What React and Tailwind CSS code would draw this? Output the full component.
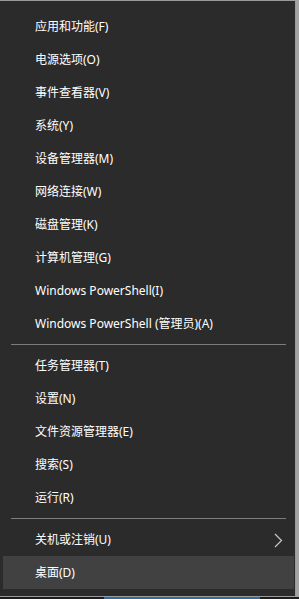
import React from 'react';

const groups = [
  [
    '应用和功能(F)',
    '电源选项(O)',
    '事件查看器(V)',
    '系统(Y)',
    '设备管理器(M)',
    '网络连接(W)',
    '磁盘管理(K)',
    '计算机管理(G)',
    'Windows PowerShell(I)',
    'Windows PowerShell (管理员)(A)',
  ],
  ['任务管理器(T)', '设置(N)', '文件资源管理器(E)', '搜索(S)', '运行(R)'],
  ['关机或注销(U)', '桌面(D)'],
];

function Chevron() {
  return (
    <svg width="9" height="15" viewBox="0 0 9 15" className="absolute right-[11px] top-[10px]">
      <path d="M1 1 L7.5 7.5 L1 14" fill="none" stroke="#c9c9c9" strokeWidth="1.2" />
    </svg>
  );
}

function MenuItem({ label, active, submenu }) {
  return (
    <div
      className={`relative flex h-[33px] items-center pl-[32px] text-[12px] text-white ${
        active ? 'bg-[#414141]' : ''
      }`}
    >
      {label}
      {submenu && <Chevron />}
    </div>
  );
}

export default function App() {
  return (
    <div
      className="flex h-[599px] w-[299px] flex-col bg-[#a3a3a3]"
      style={{ fontFamily: '"Noto Sans", "Noto Sans CJK SC", sans-serif' }}
    >
      <div className="flex h-[597px] w-[296px] flex-col border-t border-r border-b border-[#9b9b9b] bg-[#2b2b2b] pt-[9px] pb-[7px] pl-[3px] pr-[1px]">
        {groups.map((items, gi) => (
          <React.Fragment key={gi}>
            {gi > 0 && (
              <div className="flex h-[9px] items-center">
                <div className="ml-[8px] mr-[8px] h-px flex-1 bg-[#7d7d7d]" />
              </div>
            )}
            {items.map((label) => (
              <MenuItem
                key={label}
                label={label}
                active={label === '桌面(D)'}
                submenu={label === '关机或注销(U)'}
              />
            ))}
          </React.Fragment>
        ))}
      </div>
      <div className="flex h-[2px] w-full bg-[#1c1c1c]">
        <div className="ml-[104px] w-[156px] bg-[#2f6b9c]" />
      </div>
    </div>
  );
}
